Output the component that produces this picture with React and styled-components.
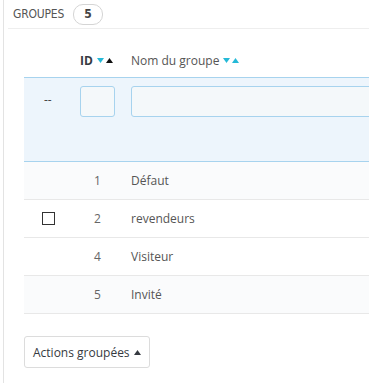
import React from "react";
import styled, { createGlobalStyle } from "styled-components";

const GlobalStyle = createGlobalStyle`
  html, body {
    margin: 0;
    padding: 0;
    background: #fff;
    overflow: hidden;
  }
  body {
    font-family: "Open Sans", "Liberation Sans", sans-serif;
    color: #555;
  }
`;

const Page = styled.div`
  width: 369px;
  height: 383px;
  padding-left: 3px;
  box-sizing: border-box;
  overflow: hidden;
`;

const Panel = styled.div`
  border-left: 1px solid #e3e3e3;
  height: 100%;
`;

const PanelHeading = styled.div`
  display: flex;
  align-items: center;
  gap: 9px;
  height: 29px;
  margin-left: 4px;
  padding-left: 5px;
  border-bottom: 1px solid #eee;
  box-sizing: border-box;
`;

const Title = styled.span`
  font-family: "Liberation Sans Narrow", "DejaVu Sans Condensed", "Liberation Sans", sans-serif;
  font-size: 12px;
  letter-spacing: -0.2px;
  color: #555;
`;

const Badge = styled.span`
  display: inline-flex;
  align-items: center;
  justify-content: center;
  width: 28px;
  height: 19px;
  border: 1px solid #d5d5d5;
  border-radius: 10px;
  font-family: "Liberation Sans Narrow", "DejaVu Sans Condensed", "Liberation Sans", sans-serif;
  font-size: 12px;
  font-weight: bold;
  color: #444;
`;

const Table = styled.div`
  margin-left: 20px;
  width: 400px;
`;

const Row = styled.div`
  display: grid;
  grid-template-columns: 56px 51px 1fr;
  align-items: ${(p) => (p.$top ? "start" : "center")};
  height: ${(p) => p.$h}px;
  background: ${(p) => p.$bg || "#fff"};
  border-bottom: ${(p) => (p.$line ? `1px solid ${p.$line}` : "none")};
  padding-top: ${(p) => p.$pt || 0}px;
  box-sizing: border-box;
  font-size: 12px;
`;

const HeadCell = styled.div`
  display: flex;
  align-items: center;
  gap: 2px;
  padding-top: 15px;
  font-weight: ${(p) => (p.$bold ? 700 : 400)};
  color: ${(p) => (p.$bold ? "#363a41" : "#555")};
  font-size: 12px;
`;

const Arrows = styled.span`
  display: inline-flex;
  gap: 2px;
  margin-left: 2px;
`;

const Cell = styled.div`
  text-align: ${(p) => p.$align || "left"};
  width: ${(p) => (p.$w ? `${p.$w}px` : "auto")};
  color: ${(p) => p.$color || "#555"};
`;

const Dash = styled.div`
  padding-left: 20px;
  padding-top: 8px;
  font-size: 12px;
  color: #444;
  line-height: 12px;
`;

const FilterInput = styled.div`
  height: 31px;
  width: ${(p) => (p.$w ? `${p.$w}px` : "auto")};
  border: 1px solid #a7d3ee;
  border-radius: 3px;
  background: #f4f8fa;
  box-sizing: border-box;
`;

const Check = styled.span`
  display: block;
  width: 13px;
  height: 13px;
  margin-left: 18px;
  border: 1.5px solid #333;
  box-sizing: border-box;
`;

const Footer = styled.div`
  margin-left: 20px;
  padding-top: 22px;
`;

const Button = styled.div`
  display: inline-flex;
  align-items: center;
  gap: 4px;
  height: 32px;
  padding: 0 8px;
  border: 1px solid #dcdcdc;
  border-radius: 3px;
  box-sizing: border-box;
  font-size: 12px;
  color: #363a41;
`;

const Tri = ({ up, color }) => (
  <svg width="7" height="5" viewBox="0 0 7 5">
    <polygon points={up ? "0,5 7,5 3.5,0" : "0,0 7,0 3.5,5"} fill={color} />
  </svg>
);

const groups = [
  { id: 1, name: "Défaut", bg: "#fafbfc" },
  { id: 2, name: "revendeurs", check: true, bg: "#fff" },
  { id: 4, name: "Visiteur", bg: "#fff" },
  { id: 5, name: "Invité", bg: "#fafbfc" },
];

export default function App() {
  return (
    <Page>
      <GlobalStyle />
      <Panel>
        <PanelHeading>
          <Title>GROUPES</Title>
          <Badge>5</Badge>
        </PanelHeading>
        <Table>
          <Row $h={49} $line="#a7d3ee">
            <div />
            <HeadCell $bold>
              ID
              <Arrows>
                <Tri color="#25b9d7" />
                <Tri up color="#111" />
              </Arrows>
            </HeadCell>
            <HeadCell>
              Nom du groupe
              <Arrows>
                <Tri color="#25b9d7" />
                <Tri up color="#25b9d7" />
              </Arrows>
            </HeadCell>
          </Row>
          <Row $h={84} $top $bg="#edf5fc" $line="#a7d3ee" $pt={8}>
            <Dash>--</Dash>
            <FilterInput $w={35} />
            <FilterInput />
          </Row>
          {groups.map((g) => (
            <Row key={g.id} $h={38} $bg={g.bg} $line="#e8e8e8">
              <div>{g.check && <Check />}</div>
              <Cell $w={35} $align="center" $color="#666">
                {g.id}
              </Cell>
              <Cell>{g.name}</Cell>
            </Row>
          ))}
        </Table>
        <Footer>
          <Button>
            Actions groupées
            <Tri up color="#363a41" />
          </Button>
        </Footer>
      </Panel>
    </Page>
  );
}
